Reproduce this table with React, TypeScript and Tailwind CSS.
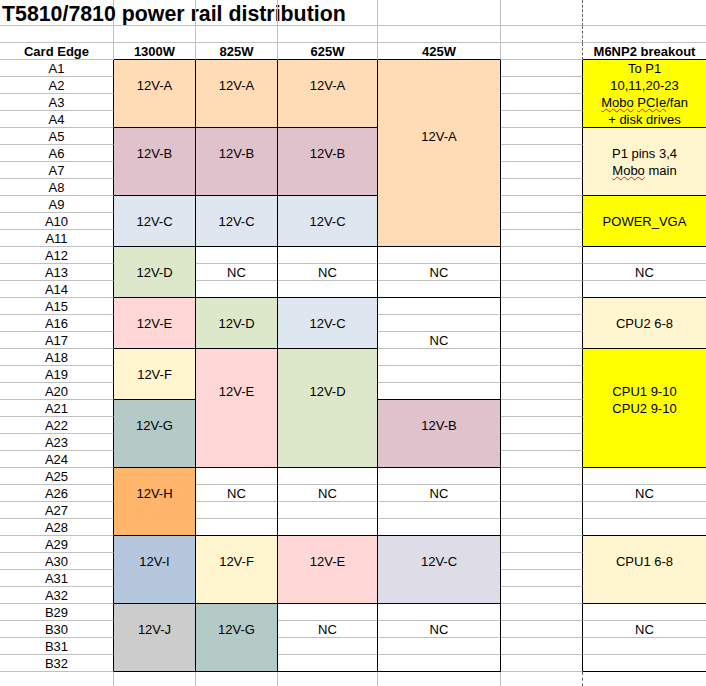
import React from "react";

type Block = {
  n: number;
  bg?: string;
  t: [number, React.ReactNode][];
};

const GRID = "border-[#c0c0c0]";
const WIDTHS = ["w-[114px]", "w-[82px]", "w-[82px]", "w-[100px]", "w-[123px]", "w-[82px]", "w-[124px]"];

// LibreOffice palette fills
const A = "bg-[#ffdbb6]";
const B = "bg-[#e0c2cd]";
const C = "bg-[#dee6ef]";
const D = "bg-[#dde8cb]";
const E = "bg-[#ffd7d7]";
const F = "bg-[#fff5ce]";
const G = "bg-[#b3cac7]";
const H = "bg-[#ffb66c]";
const I = "bg-[#b4c7dc]";
const J = "bg-[#cccccc]";
const IND = "bg-[#dedce6]";
const YEL = "bg-[#ffff00]";

// spell-check squiggle
const Sp = ({ children }: { children: React.ReactNode }) => (
  <span className="underline decoration-wavy decoration-[#e01b24] decoration-1 underline-offset-[1px]">{children}</span>
);

const labels = [
  ...Array.from({ length: 32 }, (_, i) => `A${i + 1}`),
  "B29",
  "B30",
  "B31",
  "B32",
];

const col1300: Block[] = [
  { n: 4, bg: A, t: [[1, "12V-A"]] },
  { n: 4, bg: B, t: [[1, "12V-B"]] },
  { n: 3, bg: C, t: [[1, "12V-C"]] },
  { n: 3, bg: D, t: [[1, "12V-D"]] },
  { n: 3, bg: E, t: [[1, "12V-E"]] },
  { n: 3, bg: F, t: [[1, "12V-F"]] },
  { n: 4, bg: G, t: [[1, "12V-G"]] },
  { n: 4, bg: H, t: [[1, "12V-H"]] },
  { n: 4, bg: I, t: [[1, "12V-I"]] },
  { n: 4, bg: J, t: [[1, "12V-J"]] },
];

const col825: Block[] = [
  { n: 4, bg: A, t: [[1, "12V-A"]] },
  { n: 4, bg: B, t: [[1, "12V-B"]] },
  { n: 3, bg: C, t: [[1, "12V-C"]] },
  { n: 3, t: [[1, "NC"]] },
  { n: 3, bg: D, t: [[1, "12V-D"]] },
  { n: 7, bg: E, t: [[2, "12V-E"]] },
  { n: 4, t: [[1, "NC"]] },
  { n: 4, bg: F, t: [[1, "12V-F"]] },
  { n: 4, bg: G, t: [[1, "12V-G"]] },
];

const col625: Block[] = [
  { n: 4, bg: A, t: [[1, "12V-A"]] },
  { n: 4, bg: B, t: [[1, "12V-B"]] },
  { n: 3, bg: C, t: [[1, "12V-C"]] },
  { n: 3, t: [[1, "NC"]] },
  { n: 3, bg: C, t: [[1, "12V-C"]] },
  { n: 7, bg: D, t: [[2, "12V-D"]] },
  { n: 4, t: [[1, "NC"]] },
  { n: 4, bg: E, t: [[1, "12V-E"]] },
  { n: 4, t: [[1, "NC"]] },
];

const col425: Block[] = [
  { n: 11, bg: A, t: [[4, "12V-A"]] },
  { n: 3, t: [[1, "NC"]] },
  { n: 6, t: [[2, "NC"]] },
  { n: 4, bg: B, t: [[1, "12V-B"]] },
  { n: 4, t: [[1, "NC"]] },
  { n: 4, bg: IND, t: [[1, "12V-C"]] },
  { n: 4, t: [[1, "NC"]] },
];

const colBreakout: Block[] = [
  {
    n: 4,
    bg: YEL,
    t: [
      [0, "To P1"],
      [1, "10,11,20-23"],
      [2, <><Sp>Mobo</Sp> <Sp>PCIe</Sp>/fan</>],
      [3, "+ disk drives"],
    ],
  },
  { n: 4, bg: F, t: [[1, "P1 pins 3,4"], [2, <><Sp>Mobo</Sp> main</>]] },
  { n: 3, bg: YEL, t: [[1, "POWER_VGA"]] },
  { n: 3, t: [[1, "NC"]] },
  { n: 3, bg: F, t: [[1, "CPU2 6-8"]] },
  { n: 7, bg: YEL, t: [[2, "CPU1 9-10"], [3, "CPU2 9-10"]] },
  { n: 4, t: [[1, "NC"]] },
  { n: 4, bg: F, t: [[1, "CPU1 6-8"]] },
  { n: 4, t: [[1, "NC"]] },
];

function RailBlock({ b }: { b: Block }) {
  return (
    <div className={`flex flex-col border-r border-b border-black ${b.bg ?? ""}`}>
      {Array.from({ length: b.n }, (_, i) => {
        const last = i === b.n - 1;
        const text = b.t.find(([row]) => row === i)?.[1];
        return (
          <div
            key={i}
            className={`${last ? "h-[16px]" : "h-[17px]"} ${!b.bg && !last ? `border-b ${GRID}` : ""} text-center leading-[18px] whitespace-nowrap`}
          >
            {text}
          </div>
        );
      })}
    </div>
  );
}

function RailColumn({ blocks, w }: { blocks: Block[]; w: string }) {
  return (
    <div className={`${w} shrink-0 flex flex-col`}>
      {blocks.map((b, i) => (
        <RailBlock key={i} b={b} />
      ))}
    </div>
  );
}

function PlainRow({ h }: { h: string }) {
  return (
    <div className="flex">
      {WIDTHS.map((w, i) => (
        <div
          key={i}
          className={`${w} ${h} shrink-0 border-r border-b ${GRID} ${i === 5 ? "border-r-[#666] [border-right-style:dashed]" : ""}`}
        />
      ))}
    </div>
  );
}

export default function App() {
  const headers = ["Card Edge", "1300W", "825W", "625W", "425W", "", "M6NP2 breakout"];

  return (
    <div className="w-[706px] h-[686px] overflow-hidden bg-white text-black text-[13px] font-['Liberation_Sans',Arial,sans-serif]">
      {/* Title row */}
      <div className="flex">
        {WIDTHS.map((w, i) => (
          <div
            key={i}
            className={`${w} h-[26px] shrink-0 border-r border-b ${GRID} ${i === 5 ? "border-r-[#666] [border-right-style:dashed]" : ""}`}
          >
            {i === 0 && (
              <div className="pl-[2px] pt-[4px] text-[21.33px] leading-[21px] font-bold whitespace-nowrap">
                T5810/7810 power rail distribution
              </div>
            )}
          </div>
        ))}
      </div>

      <PlainRow h="h-[17px]" />

      {/* Header row */}
      <div className="flex">
        {WIDTHS.map((w, i) => (
          <div
            key={i}
            className={`${w} h-[17px] shrink-0 border-r border-b ${GRID} ${
              (i >= 1 && i <= 4) || i === 6 ? "border-b-black" : ""
            } ${i === 5 ? "border-r-[#666] [border-right-style:dashed]" : ""} text-center font-bold leading-[18px] whitespace-nowrap`}
          >
            {headers[i]}
          </div>
        ))}
      </div>

      {/* Table body */}
      <div className="flex">
        <div className={`${WIDTHS[0]} shrink-0 flex flex-col`}>
          {labels.map((l) => (
            <div key={l} className={`h-[17px] border-b border-r ${GRID} border-r-black text-center leading-[18px]`}>
              {l}
            </div>
          ))}
        </div>
        <RailColumn blocks={col1300} w={WIDTHS[1]} />
        <RailColumn blocks={col825} w={WIDTHS[2]} />
        <RailColumn blocks={col625} w={WIDTHS[3]} />
        <RailColumn blocks={col425} w={WIDTHS[4]} />
        <div className={`${WIDTHS[5]} shrink-0 flex flex-col`}>
          {labels.map((l) => (
            <div key={l} className={`h-[17px] border-b border-r ${GRID} border-r-black`} />
          ))}
        </div>
        <RailColumn blocks={colBreakout} w={WIDTHS[6]} />
      </div>

      {/* Trailing empty row */}
      <div className="flex">
        {WIDTHS.map((w, i) => (
          <div
            key={i}
            className={`${w} h-[20px] shrink-0 border-r ${GRID} ${i === 5 ? "border-r-[#666] [border-right-style:dashed]" : ""}`}
          />
        ))}
      </div>
    </div>
  );
}
